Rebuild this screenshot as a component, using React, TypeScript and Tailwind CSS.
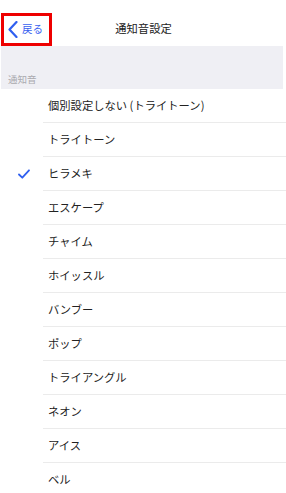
import React from "react";

const items = [
  "個別設定しない (トライトーン)",
  "トライトーン",
  "ヒラメキ",
  "エスケープ",
  "チャイム",
  "ホイッスル",
  "バンブー",
  "ポップ",
  "トライアングル",
  "ネオン",
  "アイス",
  "ベル",
];

export default function App() {
  return (
    <div
      className="w-[286px] h-[493px] bg-white overflow-hidden"
      style={{ fontFamily: '"Noto Sans CJK JP", "Noto Sans", sans-serif' }}
    >
      <div className="relative h-[46px] flex items-center justify-center">
        <div className="absolute left-[1px] top-[13px] w-[51px] h-[33px] border-[3px] border-[#ee0000] flex items-center pl-[4px] gap-[4px]">
          <svg width="10" height="17" viewBox="0 0 10 17" className="shrink-0">
            <path d="M8.5 1 L1.5 8.5 L8.5 16" fill="none" stroke="#2f5ff0" strokeWidth="2.2" strokeLinecap="round" strokeLinejoin="round" />
          </svg>
          <span className="text-[10.5px] leading-none text-[#3a62f0]">戻る</span>
        </div>
        <span className="text-[11.3px] leading-none text-[#222] mt-[12px] ml-[1px]">通知音設定</span>
      </div>
      <div className="ml-[1px] mr-[3px] h-[43px] bg-[#efeff4] flex items-end pl-[7px] pb-[5px]">
        <span className="text-[9.5px] leading-none text-[#aaaaaf]">通知音</span>
      </div>
      <div>
        {items.map((t, i) => (
          <div key={t} className="flex h-[34px]">
            <div className="w-[43px] flex items-center justify-center pl-[5px]">
              {i === 2 && (
                <svg width="12" height="10" viewBox="0 0 12 10">
                  <path d="M1 5.5 L4.3 8.7 L11 1.3" fill="none" stroke="#2f5ff0" strokeWidth="1.8" strokeLinecap="round" strokeLinejoin="round" />
                </svg>
              )}
            </div>
            <div className="flex-1 flex items-center pl-[5px] border-b border-[#ebebeb] pt-[1px]">
              <span className="text-[11.3px] leading-none text-[#222]">{t}</span>
            </div>
          </div>
        ))}
      </div>
    </div>
  );
}
